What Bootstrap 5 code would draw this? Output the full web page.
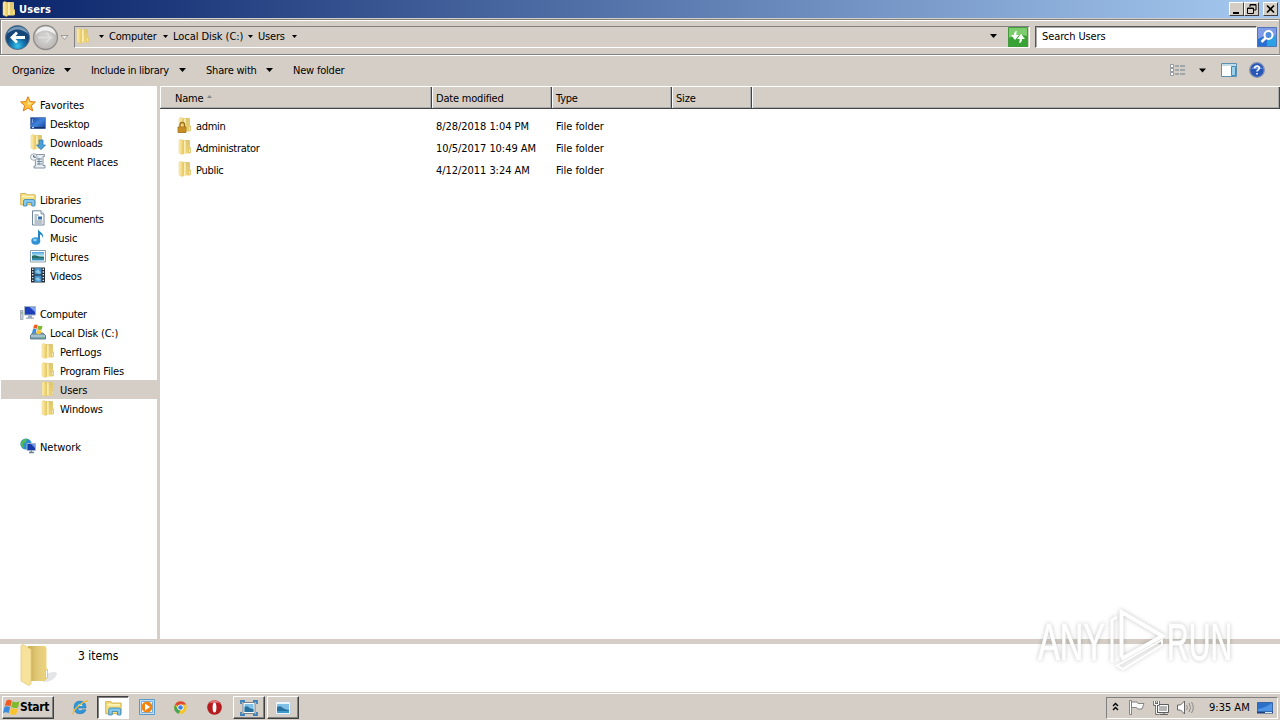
<!DOCTYPE html>
<html lang="en">
<head>
  <meta charset="UTF-8">
  <meta name="viewport" content="width=device-width, initial-scale=1.0">
  <title>Users</title>
  <!-- Bootstrap CSS -->
  <link rel="stylesheet" href="https://cdn.jsdelivr.net/npm/bootstrap@5.3.3/dist/css/bootstrap.min.css">
  <style>
    :root {
      --face: #d5cec6;
      --dark: #808080;
    }

    body {
      width: 1280px;
      height: 720px;
      overflow: hidden;
      background: var(--face);
      color: #000;
      font-family: "DejaVu Sans Condensed", "DejaVu Sans", sans-serif;
      font-stretch: condensed;
      font-size: 11px;
      line-height: 19px;
      letter-spacing: -0.2px;
      white-space: nowrap;
    }

    svg { display: block; flex: none; }

    .title-bar {
      height: 18px;
      background: linear-gradient(90deg, #0a246a, #a6caf0);
      color: #fff;
      font-weight: bold;
      padding: 0 2px 0 1px;
    }

    .title-text { padding-left: 2px; letter-spacing: 0.1px; }

    .win-btn {
      width: 15px;
      height: 14px;
      background: var(--face);
      border: 1px solid;
      border-color: #fff #404040 #404040 #fff;
    }

    .address-band {
      height: 36px;
      margin-top: 1px;
      border: 1px solid var(--dark);
      border-right-color: #999;
      box-shadow: inset 1px 1px #fff, 0 1px #fff;
      padding-left: 3px;
    }

    .address-box {
      width: 956px;
      height: 22px;
      border: 1px solid;
      border-color: var(--dark) #fff #fff var(--dark);
      padding-bottom: 2px;
    }

    .drop-arrow { margin-right: 32px; }
    .refresh-btn { margin-left: -22px; }

    .search-box {
      width: 222px;
      height: 22px;
      line-height: 20px;
      background: #fff;
      border: 1px solid;
      border-color: #555 #fff #fff #555;
      box-shadow: inset 1px 1px #aaa;
      padding-left: 6px;
      margin-left: 7px;
      letter-spacing: -0.1px;
    }

    .crumb { margin-left: 5px; }
    .crumb-computer { width: 59px; }
    .crumb-disk { width: 80px; }
    .crumb-users { width: 39px; }

    .command-bar { height: 31px; padding: 0 14px 0 12px; letter-spacing: -0.2px; }
    .command-bar svg { margin-top: -2px; }
    .cmd-organize { width: 79px; }
    .cmd-include { width: 115px; }
    .cmd-share { width: 87px; }
    .arrow-organize { width: 52px; }
    .arrow-include { width: 88px; }
    .arrow-share { width: 60px; }

    .explorer-body { height: 553px; }

    .nav-pane {
      width: 160px;
      background: #fff;
      border-right: 3px solid var(--face);
      padding-top: 9px;
    }

    .nav-line { height: 19px; gap: 4px; padding: 2px 0 0 20px; }
    .nav-line svg { margin-top: -4px; }
    .level-1 { padding-left: 30px; }
    .level-2 { padding-left: 40px; }
    .nav-current { background: var(--face); margin-left: 1px; padding-left: 39px; }
    .group-gap { margin-top: 19px; }
    .wide-label { letter-spacing: -0.05px; }
    .tight-label { letter-spacing: -0.3px; }

    .file-pane { background: #fff; }

    .column-head {
      height: 23px;
      background: var(--face);
      border-top: 1px solid #fff;
      border-bottom: 1px solid #444;
      box-shadow: inset 0 -1px #999;
      margin-bottom: 6px;
    }

    .head-cell {
      height: 21px;
      line-height: 24px;
      border-left: 1px solid #fff;
      border-right: 1px solid #444;
      box-shadow: inset -1px -1px #aaa;
      padding-left: 3px;
    }

    .head-name { width: 272px; padding-left: 14px; }
    .head-date { width: 120px; }
    .head-size { width: 80px; }

    .file-line { height: 22px; line-height: 24px; }
    .file-name { width: 276px; padding-left: 17px; gap: 3px; }
    .file-name svg { margin-top: 2px; }
    .file-date { width: 120px; letter-spacing: -0.05px; }

    .details-pane {
      height: 53px;
      background: #fff;
      border-top: 5px solid var(--face);
      padding-left: 20px;
      font-size: 12px;
      letter-spacing: 0;
    }

    .items-count { padding-top: 3px; margin-left: 18px; }

    .task-bar {
      height: 28px;
      border-top: 1px solid var(--face);
      box-shadow: inset 0 1px #fff;
      padding: 3px 2px 1px;
    }

    .task-btn {
      width: 32px;
      height: 23px;
      border: 1px solid;
      border-color: #fff #404040 #404040 #fff;
      box-shadow: inset -1px -1px var(--dark);
    }

    .start-btn { width: 52px; font-weight: bold; font-size: 12px; letter-spacing: -0.3px; }
    .last-task { margin-left: 2px; }

    .task-pressed {
      background: #fff;
      border-color: #404040 #fff #fff #404040;
      box-shadow: inset 1px 1px var(--dark);
    }

    .tray {
      width: 172px;
      height: 22px;
      border: 1px solid;
      border-color: var(--dark) #fff #fff var(--dark);
      letter-spacing: 0;
    }

    .watermark { left: 1030px; top: 600px; }
    .watermark-ink { filter: drop-shadow(0 0 2px rgba(0, 0, 0, .24)); }
  </style>
</head>
<body>

<!-- Shared icons -->
<svg width="0" height="0" class="position-absolute" aria-hidden="true">
  <defs>
    <linearGradient id="gold" x1="0" x2="1"><stop offset="0" stop-color="#fff3b8"/><stop offset="1" stop-color="#e9c55b"/></linearGradient>
    <linearGradient id="goldBack" x1="0" y1="0" x2="0" y2="1"><stop offset="0" stop-color="#dcc673"/><stop offset="1" stop-color="#f0d471"/></linearGradient>
    <linearGradient id="bigBack" x1="0" x2="1"><stop offset="0" stop-color="#c9ab50"/><stop offset=".45" stop-color="#e0c878"/><stop offset="1" stop-color="#efd77e"/></linearGradient>
    <linearGradient id="screen" x1="0" y1="0" x2="1" y2="1"><stop offset="0" stop-color="#173f97"/><stop offset=".5" stop-color="#3f83dd"/><stop offset="1" stop-color="#173d91"/></linearGradient>
    <radialGradient id="ball" cy=".85"><stop offset="0" stop-color="#35c7ef"/><stop offset=".55" stop-color="#1676ae"/><stop offset="1" stop-color="#164679"/></radialGradient>
    <radialGradient id="ballOff"><stop offset="0" stop-color="#dedcda"/><stop offset="1" stop-color="#b9b6b4"/></radialGradient>
    <linearGradient id="sky" x1="0" y1="0" x2="0" y2="1"><stop offset="0" stop-color="#4aa3e0"/><stop offset=".5" stop-color="#c9ecf5"/><stop offset=".6" stop-color="#2c7d75"/><stop offset="1" stop-color="#3a92c9"/></linearGradient>
  </defs>
  <symbol id="folder" viewBox="0 0 16 16">
    <path d="M6 1h6.500l.5 1v6l1 1v4.500l-1 1H6z" fill="url(#goldBack)"/>
    <path d="M7 1.500h1.700v12.500H7z" fill="#fbeeb5"/>
    <path d="M2 1.500 3.500.500 6.500 1.500V15l-1 .6L2 14z" fill="url(#gold)" stroke="#e6ca70" stroke-width=".5"/>
    <path d="M11.800 9.500h1.400v4h-1.400z" fill="#fff8dc" stroke="#c5a850" stroke-width=".4"/>
  </symbol>
  <symbol id="lock" viewBox="0 0 16 16">
    <use href="#folder"/>
    <path d="M3 10V8q0-2.500 2.300-2.500T7.600 8v2" fill="none" stroke="#9b721b" stroke-width="1.300"/>
    <path d="M1 10h8v5.500H1z" fill="#dba12c" stroke="#8a5d10" stroke-width=".7"/>
    <path d="M2 12h6M2 14h6" stroke="#a87318" stroke-width=".8"/>
  </symbol>
  <symbol id="star" viewBox="0 0 16 16">
    <path d="m8 .7 2.100 4.900 5.300.4-4 3.500 1.300 5.400L8 12l-4.700 2.900 1.300-5.400-4-3.500 5.300-.4z" fill="#ffc33d" stroke="#e07a17"/>
    <path d="m8 3 1 3.500 3.500.4L8 9z" fill="#ffe88e"/>
  </symbol>
  <symbol id="desktop" viewBox="0 0 16 16">
    <path d="M.5 2.500h15v11H.5z" fill="url(#screen)" stroke="#6b87b7"/>
    <path d="M1 12h14v1.500H1z" fill="#16326d"/>
    <path d="M2 5h1M2 7h1M2 12.600h2" stroke="#cfe6ff"/>
  </symbol>
  <symbol id="trayDesktop" viewBox="0 0 16 16">
    <path d="M.5 2.500h15v10H.5z" fill="#2b6fc9" stroke="#3c65a5"/>
    <path d="M1 9q7-1 14-6v9H1z" fill="#4d95e4"/>
    <path d="M0 11.500h16v2H0z" fill="#20407c"/>
    <path d="M8 12.500h7" stroke="#dbe9f7"/>
  </symbol>
  <symbol id="downloads" viewBox="0 0 16 16">
    <use href="#folder" x="-1"/>
    <path d="M9 6h4v5h2.500L11 15.700 6.500 11H9z" fill="#4ba1dc" stroke="#2571ab" stroke-width=".7"/>
  </symbol>
  <symbol id="recent" viewBox="0 0 16 16">
    <path d="M5 1.500h9.500v2H13v9h2v2.500H4v-2h1.500z" fill="#e7edf2" stroke="#7c8b98" stroke-width=".9"/>
    <path d="M7 6h5M7 8.500h5M7 11h5M9 5v7" stroke="#71889a"/>
    <circle cx="3.800" cy="4" r="3.300" fill="#f1f4f6" stroke="#8e9ba6" stroke-width=".8"/>
    <path d="M3.800 2v2.200h2" fill="none" stroke="#456"/>
  </symbol>
  <symbol id="library" viewBox="0 0 16 16">
    <path d="M.7 2.500h5l1 1.300h8.500v10H.7z" fill="#f5df83" stroke="#cda640" stroke-width=".8"/>
    <path d="M2 5.500h12" stroke="#fff4bd" stroke-width="1.500"/>
    <path d="M3.500 15v-4.800q0-1.700 1.500-1.700h8q1.800 0 1.800 1.700V15h-3v-3.300H6.800V15z" fill="#83c8ee" stroke="#3484b7" stroke-width=".8"/>
  </symbol>
  <symbol id="document" viewBox="0 0 16 16">
    <path d="M2.500.8h8.500L14 4v11H2.500z" fill="#fbfdff" stroke="#71859a"/>
    <path d="M11 .8V4h3" fill="#d5e2ee" stroke="#71859a" stroke-width=".8"/>
    <path d="M4.500 5h4M4.500 7h2.500M4.500 9h2.500M4.500 11h8M4.500 13h8" stroke="#77889c"/>
    <path d="M8 6.500h4v3H8z" fill="#356fa9"/>
  </symbol>
  <symbol id="music" viewBox="0 0 16 16">
    <path d="M8 0c.8 3.300 6.500 3.500 5 9.500-.4-2.700-1.700-3.700-3-4v6.500H8z" fill="#2384c4"/>
    <ellipse cx="5.800" cy="12" rx="4.500" ry="3.700" fill="#2e91d3"/>
    <ellipse cx="5" cy="11" rx="2" ry="1.400" fill="#88cdf2"/>
  </symbol>
  <symbol id="picture" viewBox="0 0 16 16">
    <path d="M.5 2.500h15v11.500H.5z" fill="#fff" stroke="#8ba0ae"/>
    <path d="M2 4h12v8.500H2z" fill="url(#sky)"/>
    <path d="M2 8c3-2 5 1 12 1v1H2z" fill="#276b62"/>
  </symbol>
  <symbol id="slide" viewBox="0 0 16 16">
    <path d="M.5 1.500h15v13H.5z" fill="#eef4f8" stroke="#c3ced6"/>
    <path d="M2 4h12v9H2z" fill="#7fc0e6"/>
    <path d="M2 7q4-2 6 1 3 2 6 2v3H2z" fill="#28719f"/>
    <path d="M2 11h12v2H2z" fill="#3d9acb"/>
  </symbol>
  <symbol id="video" viewBox="0 0 16 16">
    <path d="M1 .5h14v15H1z" fill="#222d39"/>
    <path d="M4.500 1h7v6.500h-7zM4.500 8.500h7V15h-7z" fill="#438fc9"/>
    <path d="m5 5 3-3 3 4-2 1zM5 12l3-2 3 3-3 1z" fill="#89c5df"/>
    <path d="M2.700 1.500v13M13.300 1.500v13" stroke="#e4ecf2" stroke-width="1.400" stroke-dasharray="1.400 1.400"/>
  </symbol>
  <symbol id="computer" viewBox="0 0 16 16">
    <path d="M.5 5.500h2.500v9H.5z" fill="#c8d0d5" stroke="#87929c" stroke-width=".7"/>
    <path d="M1 8h1.500" stroke="#43b64a"/>
    <path d="M4.500 1.500h11v8.500h-11z" fill="#1c3ebb" stroke="#a7b4c5"/>
    <path d="M9.500 2h5.500v5z" fill="#7ca1ed"/>
    <path d="M8 10.500h4v2H8zM6 12.500h8v1.300H6z" fill="#9ba8b7"/>
  </symbol>
  <symbol id="flag" viewBox="0 0 16 16">
    <path d="M3.200 1.600Q5.500-.2 8.300 1.600L7 7Q4.500 5.300 1.600 7z" fill="#ef5a25"/>
    <path d="M9 2.200q2.700 1.500 6.300.2L14.200 8q-3.300 1.300-6.500-.4z" fill="#7dbb2e"/>
    <path d="M1.300 7.700q2.800-1.500 5.400-.1L5.400 13.300Q2.700 11.800 0 13.300z" fill="#3a8bdc"/>
    <path d="M7.500 8.300q2.900 1.600 6.400.4l-1.400 5.600q-3.300 1.300-6.400-.4z" fill="#fac22c"/>
  </symbol>
  <symbol id="disk" viewBox="0 0 16 16">
    <path d="m2.500 9-2 2.500V15h15v-3.500L13 9z" fill="#7fa3b5" stroke="#49697a" stroke-width=".8"/>
    <path d="M1 12h14" stroke="#cfdfe7"/>
    <path d="M12 13.700h2" stroke="#4ed456"/>
    <use href="#flag" x="2" y="0" width="11" height="11"/>
  </symbol>
  <symbol id="network" viewBox="0 0 16 16">
    <circle cx="6" cy="6" r="5.600" fill="#2b8ed1"/>
    <path d="M2 3q3-3 5-2l-1 3-3 2 1 4-2-1-1.500-3z" fill="#54bc50"/>
    <path d="M7 5.500h8.500v7H7z" fill="#1938aa" stroke="#a8b9cc" stroke-width=".9"/>
    <path d="M11 6h4v4z" fill="#7595e3"/>
    <path d="M9 14.500h5M11.300 12.500v2" stroke="#6c8095" stroke-width="1.300"/>
  </symbol>
  <symbol id="caret" viewBox="0 0 7 4"><path d="M0 0h7L3.500 4z"/></symbol>
</svg>

<!-- Title bar -->
<div class="title-bar d-flex align-items-center">
  <svg width="16" height="16"><use href="#folder"/></svg>
  <span class="title-text">Users</span>
  <div class="win-btn ms-auto"><svg width="13" height="12"><path d="M3 9h6v2H3z"/></svg></div>
  <div class="win-btn"><svg width="13" height="12"><path d="M5 4V1.500h6V7H9M5 2h6" fill="none" stroke="#000"/><path d="M2.500 5h6v5.500h-6zM2 5.500h7" fill="none" stroke="#000"/></svg></div>
  <div class="win-btn ms-1"><svg width="13" height="12"><path d="m3 2.500 7 7m0-7-7 7" stroke="#000" stroke-width="1.600"/></svg></div>
</div>

<!-- Address bar -->
<div class="address-band d-flex align-items-center">
  <svg width="70" height="34" viewBox="0 0 70 34">
    <circle cx="13.500" cy="17.500" r="12" fill="url(#ball)" stroke="#56718b"/>
    <path d="M3 14q10-9 21 0Q23 7 13.500 6.500 5 7 3 14z" fill="#a9c4da" opacity=".65"/>
    <path d="M6 17.500 12 11.500l2 2-2.500 2.500H21v3h-9.500l2.500 2.500-2 2z" fill="#fff"/>
    <circle cx="41.500" cy="17.500" r="12" fill="url(#ballOff)" stroke="#8f8d8c" stroke-width="1.300"/>
    <path d="M31 15q10-9 21 0-1-8-10.500-8.500Q33 7 31 15z" fill="#f0efef"/>
    <path d="M49 17.500 43 11.500l-2 2 2.500 2.500H34v3h9.500L41 21.500l2 2z" fill="#dedcdb" stroke="#c5c2c0" stroke-width=".6"/>
    <path d="M57 15.500h7l-3.500 4z" fill="#eee" stroke="#8b8986" stroke-width=".8"/>
  </svg>
  <div class="address-box d-flex align-items-center">
    <svg width="16" height="18"><use href="#folder"/></svg>
    <svg width="5" height="3" class="ms-2"><use href="#caret"/></svg>
    <span class="crumb crumb-computer d-flex align-items-center justify-content-between"><span>Computer</span><svg width="5" height="3"><use href="#caret"/></svg></span>
    <span class="crumb crumb-disk d-flex align-items-center justify-content-between"><span class="wide-label">Local Disk (C:)</span><svg width="5" height="3"><use href="#caret"/></svg></span>
    <span class="crumb crumb-users d-flex align-items-center justify-content-between"><span>Users</span><svg width="5" height="3"><use href="#caret"/></svg></span>
    <svg width="7" height="4" class="ms-auto drop-arrow"><use href="#caret"/></svg>
  </div>
  <!-- Refresh sits inside the end of the address box -->
  <svg class="refresh-btn" width="20" height="20" viewBox="0 0 20 20">
    <path d="M0 0h20v20H0z" fill="#38a334"/><path d="M0 0h20v9q-10-2-20 2z" fill="#7dcc6e"/><path d="M.5.5h19v19H.5z" fill="none" stroke="#429a3d"/>
    <path d="M9 4Q6 4 6 8H3l4 5 4-5H8.500Q8 6 9 4zM11 16q3 0 3-4h3l-4-5-4 5h2.500q.5 2-.5 4z" fill="#fff"/>
  </svg>
  <div class="search-box">Search Users</div>
  <svg width="20" height="20" viewBox="0 0 20 20">
    <path d="M.5.500h19v19H.5z" fill="#276fd2" stroke="#5275b8"/><path d="M1 1h18v8Q8 8 1 12z" fill="#809ce6"/><path d="M10 19V12l9-4v11z" fill="#2ba2e5"/>
    <circle cx="11.500" cy="8" r="4" fill="#508bdc" stroke="#fff" stroke-width="2"/><path d="m8.500 11-4 4" stroke="#fff" stroke-width="2.500"/>
  </svg>
</div>

<!-- Command bar -->
<div class="command-bar d-flex align-items-center">
  <span class="cmd-organize d-flex align-items-center"><span class="arrow-organize">Organize</span><svg width="7" height="4"><use href="#caret"/></svg></span>
  <span class="cmd-include d-flex align-items-center"><span class="arrow-include tight-label">Include in library</span><svg width="7" height="4"><use href="#caret"/></svg></span>
  <span class="cmd-share d-flex align-items-center"><span class="arrow-share">Share with</span><svg width="7" height="4"><use href="#caret"/></svg></span>
  <span>New folder</span>
  <svg width="96" height="16" viewBox="0 0 96 16" class="ms-auto">
    <path d="M.5 2.500h3v3h-3zM.5 6.500h3v3h-3zM.5 10.500h3v3h-3z" fill="#fff" stroke="#88929c" stroke-width=".9"/>
    <path d="M5 4h4M5 8h4M5 12h4M10 4h5M10 8h5M10 12h5" stroke="#6d7e8d"/>
    <path d="M29 6.500h7l-3.500 4z"/>
    <path d="M51.500 1.500h15v13h-15z" fill="#fff" stroke="#5c90ae"/><path d="M52 2h14v2H52z" fill="#c3dcea"/><path d="M61.500 4.500h4v9h-4z" fill="#9bd3ef" stroke="#3f8ab6"/>
    <circle cx="87" cy="8" r="7.300" fill="#2857b9" stroke="#8291b2" stroke-width="1.300"/><path d="M81 7q6-7 12 0" fill="#7394da"/>
    <path d="M84.700 6.300Q84.700 4 87 4t2.300 2.100Q89.300 7.300 88 8q-1 .5-1 1.500M87 11v1.500" fill="none" stroke="#fff" stroke-width="1.600"/>
  </svg>
</div>

<div class="explorer-body d-flex">
  <!-- Navigation pane -->
  <div class="nav-pane">
    <div class="nav-line d-flex align-items-center"><svg width="16" height="16"><use href="#star"/></svg><span class="wide-label">Favorites</span></div>
    <div class="nav-line level-1 d-flex align-items-center"><svg width="16" height="16"><use href="#desktop"/></svg>Desktop</div>
    <div class="nav-line level-1 d-flex align-items-center"><svg width="16" height="16"><use href="#downloads"/></svg>Downloads</div>
    <div class="nav-line level-1 d-flex align-items-center"><svg width="16" height="16"><use href="#recent"/></svg><span class="wide-label">Recent Places</span></div>

    <div class="nav-line group-gap d-flex align-items-center"><svg width="16" height="16"><use href="#library"/></svg>Libraries</div>
    <div class="nav-line level-1 d-flex align-items-center"><svg width="16" height="16"><use href="#document"/></svg><span class="tight-label">Documents</span></div>
    <div class="nav-line level-1 d-flex align-items-center"><svg width="16" height="16"><use href="#music"/></svg>Music</div>
    <div class="nav-line level-1 d-flex align-items-center"><svg width="16" height="16"><use href="#picture"/></svg><span class="wide-label">Pictures</span></div>
    <div class="nav-line level-1 d-flex align-items-center"><svg width="16" height="16"><use href="#video"/></svg>Videos</div>

    <div class="nav-line group-gap d-flex align-items-center"><svg width="16" height="16"><use href="#computer"/></svg><span class="tight-label">Computer</span></div>
    <div class="nav-line level-1 d-flex align-items-center"><svg width="16" height="16"><use href="#disk"/></svg>Local Disk (C:)</div>
    <div class="nav-line level-2 d-flex align-items-center"><svg width="16" height="16"><use href="#folder"/></svg><span class="wide-label">PerfLogs</span></div>
    <div class="nav-line level-2 d-flex align-items-center"><svg width="16" height="16"><use href="#folder"/></svg>Program Files</div>
    <div class="nav-line nav-current d-flex align-items-center"><svg width="16" height="16"><use href="#folder"/></svg><span class="wide-label">Users</span></div>
    <div class="nav-line level-2 d-flex align-items-center"><svg width="16" height="16"><use href="#folder"/></svg>Windows</div>

    <div class="nav-line group-gap d-flex align-items-center"><svg width="16" height="16"><use href="#network"/></svg><span class="wide-label">Network</span></div>
  </div>

  <!-- File list -->
  <div class="file-pane flex-grow-1">
    <div class="column-head d-flex">
      <div class="head-cell head-name d-flex">Name<svg width="5" height="3" class="ms-1 mt-2"><path d="M0 3h5L2.500 0z" fill="#888"/></svg></div>
      <div class="head-cell head-date">Date modified</div>
      <div class="head-cell head-date">Type</div>
      <div class="head-cell head-size">Size</div>
      <div class="head-cell flex-grow-1"></div>
    </div>
    <div class="file-line d-flex">
      <div class="file-name d-flex align-items-start"><svg width="16" height="16"><use href="#lock"/></svg><span class="tight-label">admin</span></div>
      <div class="file-date">8/28/2018 1:04 PM</div>
      <div class="wide-label">File folder</div>
    </div>
    <div class="file-line d-flex">
      <div class="file-name d-flex align-items-start"><svg width="16" height="16"><use href="#folder"/></svg><span class="tight-label">Administrator</span></div>
      <div class="file-date">10/5/2017 10:49 AM</div>
      <div class="wide-label">File folder</div>
    </div>
    <div class="file-line d-flex">
      <div class="file-name d-flex align-items-start"><svg width="16" height="16"><use href="#folder"/></svg><span class="tight-label">Public</span></div>
      <div class="file-date">4/12/2011 3:24 AM</div>
      <div class="wide-label">File folder</div>
    </div>
  </div>
</div>

<!-- Details pane -->
<div class="details-pane d-flex">
  <svg width="40" height="44" viewBox="0 0 40 44">
    <path d="M25 30q12-4 12 0-3 8-14 8z" fill="#c9ccce" opacity=".5"/>
    <path d="M8 2h17l1.500 2v20l1.500 2v7L25 37H8z" fill="url(#bigBack)"/>
    <path d="M1 1.500 3 .5l8 5V40l-2 1.500-8-4.500z" fill="#f6e29a" stroke="#e4cb7c" stroke-width=".8"/>
    <path d="M25.500 26h2v8h-2z" fill="#fff" stroke="#c9a94a" stroke-width=".5"/>
  </svg>
  <span class="items-count">3 items</span>
</div>

<!-- Taskbar -->
<div class="task-bar d-flex align-items-center">
  <div class="task-btn start-btn d-flex align-items-center ps-0"><svg width="17" height="17"><use href="#flag"/></svg>Start</div>
  <svg width="43" height="20" viewBox="0 0 43 20">
    <path d="M32 11.800q-1.200 4-6 4-6-.2-6-6.400 0-6.100 6-6.300 6.200.2 6 7h-8.300q.2 2.700 2.300 2.800 1.400 0 2-1.100z" fill="#2f98dc" stroke="#156bad" stroke-width=".5"/>
    <path d="M23.800 8.100h4.700q-.3-2.100-2.300-2.100t-2.400 2.100z" fill="#d9edf7"/>
    <path d="M19.500 16.500q-2-2.500 5-8.500 8-6.500 9.500-4.500" fill="none" stroke="#f1ba32" stroke-width="1.500"/>
  </svg>
  <div class="task-btn task-pressed d-flex align-items-center justify-content-center"><svg width="17" height="17"><use href="#library"/></svg></div>
  <svg width="104" height="20" viewBox="0 0 104 20">
    <path d="M10.500 1.500h15v15h-15z" fill="#c4def1" stroke="#579acb"/><path d="M12.500 3.500h11v11h-11z" fill="#fff" stroke="#77addb"/>
    <circle cx="18" cy="9" r="5.500" fill="#f28414"/><path d="m16 5.500 5 3.500-5 3.500z" fill="#fff"/>
    <circle cx="51.500" cy="9.500" r="6.300" fill="#f5c52d"/><path d="M51.500 9.500 46 6.400Q48 3.200 51.500 3.200q3.800 0 5.600 3.200h-5.600z" fill="#df4938"/>
    <path d="m46 6.400 3 5.200 2.500 1-2 3.100q-4.300-1.700-4.300-6.200 0-1.700.8-3.100z" fill="#43a452"/>
    <circle cx="51.500" cy="9.500" r="3" fill="#fff"/><circle cx="51.500" cy="9.500" r="2.300" fill="#3d82e3"/>
    <circle cx="85.500" cy="9.500" r="7.300" fill="#b61b1d"/><path d="M80 5.500q5-7 11 0-5-2-11 0z" fill="#e67a79"/>
    <ellipse cx="85.500" cy="9.500" rx="1.900" ry="5" fill="#fff"/>
  </svg>
  <div class="task-btn d-flex align-items-center justify-content-center">
    <svg width="18" height="18" viewBox="0 0 18 18"><path d="M3 3.500h12v11H3z" fill="#fff" stroke="#708596"/><path d="M4.500 5h9v8h-9z" fill="#7fc0e6"/><path d="M4.500 8q3-2 5 1 2 1 4 1v3h-9z" fill="#28719f"/><path d="M1 5V2h4M13 2h4v3M17 13v3h-4M5 16H1v-3" fill="none" stroke="#3f82b9" stroke-width="1.800"/></svg>
  </div>
  <div class="task-btn last-task d-flex align-items-center justify-content-center"><svg width="16" height="16"><use href="#slide"/></svg></div>
  <div class="tray d-flex align-items-center ms-auto">
    <svg width="102" height="18" viewBox="0 0 102 18">
      <path d="M6 7 8.500 4.500 11 7M6 11 8.500 8.500 11 11" fill="none" stroke="#000" stroke-width="1.400"/>
      <path d="M22.500 1.500h2v14h-2z" fill="#fff" stroke="#6d6d6d" stroke-width=".8"/><path d="M24.500 3h5.500l1 1.500h6l-2 5.500h-4.500l-1-1.500h-5z" fill="#fafafa" stroke="#6d6d6d" stroke-width=".8"/>
      <path d="M50.500 5.500h11v8h-11z" fill="#b4b4b4" stroke="#5d5d5d"/><path d="M51.500 6.500h9v6h-9z" fill="none" stroke="#fff"/><path d="M53 15.500h8M57 13.500v2" stroke="#666"/>
      <path d="M47.500 2v3.500h4V2M49.500 5.500v9h3" fill="none" stroke="#555" stroke-width="2.400"/><path d="M47.500 2v3.500h4V2M49.500 5.500v9h3" fill="none" stroke="#fff"/>
      <path d="M70.500 6h3L77.500 2v13l-4-4h-3z" fill="#fff" stroke="#666"/>
      <path d="M79.500 6q2 2.500 0 5M82 4q3 4.500 0 9M84.500 3q3.500 5.500 0 11" fill="none" stroke="#888"/>
    </svg>
    <span class="clock">9:35 AM</span>
    <svg width="16" height="16" class="ms-auto me-1"><use href="#trayDesktop"/></svg>
  </div>
</div>

<!-- Watermark over the window -->
<svg class="watermark position-absolute" width="240" height="80" viewBox="0 0 240 80">
  <g class="watermark-ink" font-family="Liberation Sans" font-size="51" fill="#fff" stroke="#fff" stroke-width=".7" letter-spacing="0">
    <text transform="translate(8 59.500) scale(.64 1)">ANY</text>
    <text transform="translate(137 59.500) scale(.59 1)">RUN</text>
    <path d="M82 62V20l5-3" fill="none" stroke-width="3"/>
    <path d="M91.500 57V12l41 24-41 23" fill="none" stroke-width="4"/>
    <path d="M87 65.500 132 40v5L93 69z" fill="none" stroke-width="2"/>
  </g>
</svg>

<!-- Bootstrap JS -->
<script src="https://cdn.jsdelivr.net/npm/bootstrap@5.3.3/dist/js/bootstrap.bundle.min.js"></script>
</body>
</html>
